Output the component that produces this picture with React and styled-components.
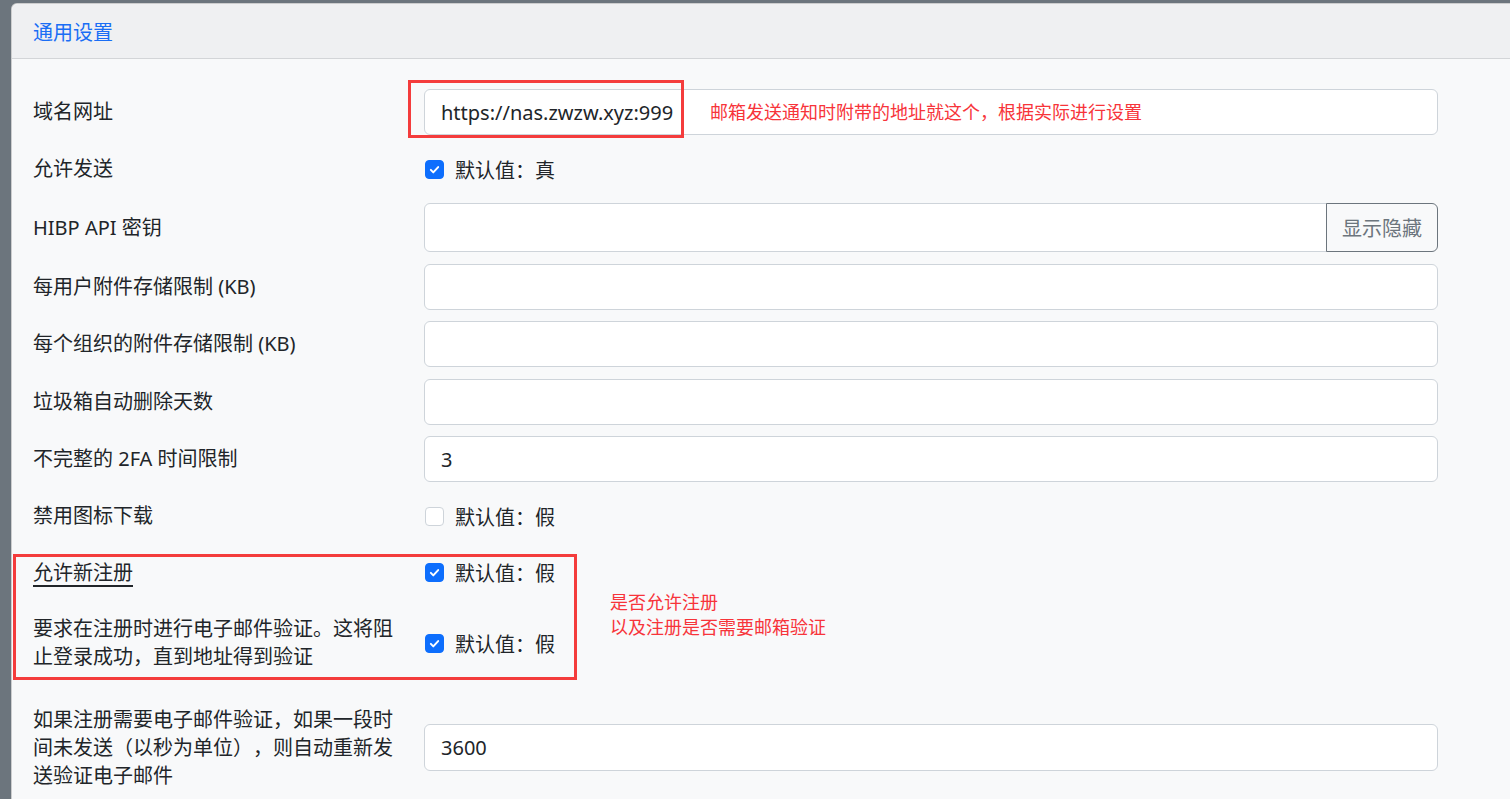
import React from 'react';
import styled, { createGlobalStyle } from 'styled-components';

const GlobalStyle = createGlobalStyle`
  html, body {
    margin: 0;
    padding: 0;
    background: #6c757d;
    overflow: hidden;
  }
  body {
    font-family: "Noto Sans", "Noto Sans CJK SC", sans-serif;
    color: #212529;
    text-spacing-trim: space-all;
  }
`;

const Page = styled.div`
  padding: 3px 0 0 11px;
  height: 796px;
`;

const Card = styled.section`
  width: 1560px;
  background: #f8f9fa;
  border: 1px solid rgba(0, 0, 0, 0.175);
  border-radius: 6px 0 0 0;
  height: 100%;
`;

const CardHeader = styled.header`
  height: 54px;
  display: flex;
  align-items: center;
  padding: 0 21px;
  background: #eff0f2;
  border-bottom: 1px solid #d3d5d8;
  border-radius: 6px 0 0 0;
  color: #1a6ef5;
  font-size: 20px;
`;

const CardBody = styled.div`
  padding: 30px 22px 0 21px;
  display: flex;
  flex-direction: column;
  gap: 11.5px;
`;

const Row = styled.div`
  display: grid;
  grid-template-columns: 391px 1014px;
  align-items: center;
  margin-top: ${(p) => p.$shift || 0}px;
`;

const Label = styled.label`
  font-size: 20px;
  line-height: 28px;
  padding: 8.5px 20px 8.5px 0;
  text-spacing-trim: space-all;
  span {
    text-decoration: underline;
    text-decoration-thickness: 2px;
    text-underline-offset: 5px;
  }
`;

const Field = styled.div`
  position: relative;
  display: flex;
  align-items: center;
`;

const Input = styled.div`
  flex: 1;
  box-sizing: border-box;
  height: ${(p) => p.$h || 46}px;
  display: flex;
  align-items: center;
  padding: 0 16px;
  background: #fff;
  border: 1px solid #ced4da;
  border-radius: ${(p) => (p.$joined ? '6px 0 0 6px' : '6px')};
  font-size: 20px;
  white-space: nowrap;
  overflow: hidden;
`;

const Button = styled.button`
  box-sizing: border-box;
  height: 49px;
  padding: 0 15px;
  margin-left: -1px;
  background: transparent;
  border: 1px solid #6c757d;
  border-radius: 0 6px 6px 0;
  color: #6c757d;
  font-family: inherit;
  font-size: 20px;
`;

const Check = styled.span`
  box-sizing: border-box;
  width: 19px;
  height: 19px;
  border-radius: 4px;
  display: inline-flex;
  align-items: center;
  justify-content: center;
  margin: 0 11px 0 1px;
  background: ${(p) => (p.$on ? '#0d6efd' : '#fff')};
  border: 1px solid ${(p) => (p.$on ? '#0d6efd' : '#ced4da')};
`;

const CheckText = styled.span`
  font-size: 20px;
`;

const Group = styled.div`
  position: relative;
  display: flex;
  flex-direction: column;
  gap: 11.5px;
`;

const RedBox = styled.div`
  position: absolute;
  left: ${(p) => p.$x}px;
  top: ${(p) => p.$y}px;
  width: ${(p) => p.$w}px;
  height: ${(p) => p.$h}px;
  box-sizing: border-box;
  border: 3px solid #f43c3c;
  pointer-events: none;
`;

const Note = styled.div`
  position: absolute;
  left: ${(p) => p.$x}px;
  top: ${(p) => p.$y}px;
  color: #f7343a;
  font-family: "Noto Sans CJK SC", sans-serif;
  font-size: 18px;
  line-height: 25px;
  white-space: nowrap;
`;

const Tick = () => (
  <svg width="13" height="13" viewBox="0 0 16 16">
    <path d="M3.5 8.5l3 3 6-6.5" fill="none" stroke="#fff" strokeWidth="2.4" strokeLinecap="round" strokeLinejoin="round" />
  </svg>
);

const CheckRow = ({ label, on, text }) => (
  <Row>
    <Label>{label}</Label>
    <Field>
      <Check $on={on}>{on && <Tick />}</Check>
      <CheckText>{text}</CheckText>
    </Field>
  </Row>
);

const InputRow = ({ label, value }) => (
  <Row>
    <Label>{label}</Label>
    <Field>
      <Input>{value}</Input>
    </Field>
  </Row>
);

const App = () => (
  <>
    <GlobalStyle />
    <Page>
      <Card>
        <CardHeader>通用设置</CardHeader>
        <CardBody>
          <Row>
            <Label>域名网址</Label>
            <Field>
              <Input>https://nas.zwzw.xyz:999</Input>
              <RedBox $x={-16} $y={-9} $w={276} $h={58} />
              <Note $x={286} $y={10}>邮箱发送通知时附带的地址就这个，根据实际进行设置</Note>
            </Field>
          </Row>
          <CheckRow label="允许发送" on text="默认值：真" />
          <Row>
            <Label>HIBP API 密钥</Label>
            <Field>
              <Input $h={49} $joined />
              <Button>显示隐藏</Button>
            </Field>
          </Row>
          <InputRow label="每用户附件存储限制 (KB)" />
          <InputRow label="每个组织的附件存储限制 (KB)" />
          <InputRow label="垃圾箱自动删除天数" />
          <InputRow label="不完整的 2FA 时间限制" value="3" />
          <CheckRow label="禁用图标下载" text="默认值：假" />
          <Group>
            <Row>
              <Label>
                <span>允许新注册</span>
              </Label>
              <Field>
                <Check $on>
                  <Tick />
                </Check>
                <CheckText>默认值：假</CheckText>
              </Field>
            </Row>
            <CheckRow label="要求在注册时进行电子邮件验证。这将阻止登录成功，直到地址得到验证" on text="默认值：假" />
            <RedBox $x={-20} $y={4} $w={564} $h={126} />
            <Note $x={577} $y={39}>
              是否允许注册
              <br />
              以及注册是否需要邮箱验证
            </Note>
          </Group>
          <Row $shift={6}>
            <Label>如果注册需要电子邮件验证，如果一段时间未发送（以秒为单位），则自动重新发送验证电子邮件</Label>
            <Field>
              <Input $h={47}>3600</Input>
            </Field>
          </Row>
        </CardBody>
      </Card>
    </Page>
  </>
);

export default App;
